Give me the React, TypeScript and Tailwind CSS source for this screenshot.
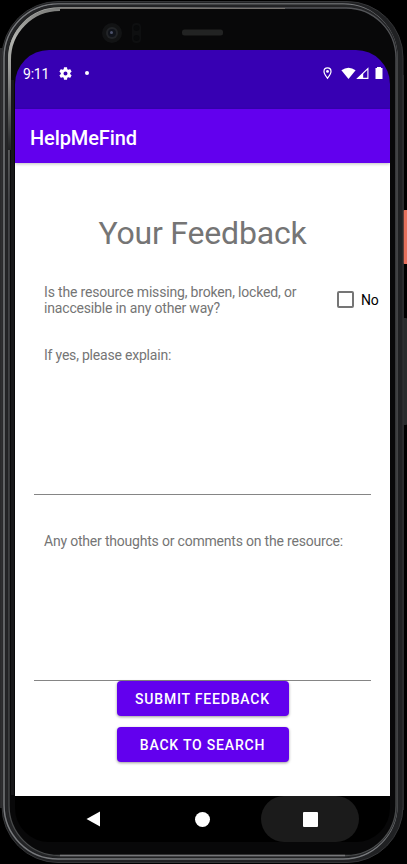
import React from "react";

function PhoneFrame() {
  return (
    <svg className="absolute inset-0" width="407" height="864" viewBox="0 0 407 864" fill="none" aria-hidden="true">
      <defs>
        <linearGradient id="metal" x1="0" y1="0" x2="407" y2="500" gradientUnits="userSpaceOnUse">
          <stop offset="0" stopColor="#a5a6a3" />
          <stop offset="0.12" stopColor="#a0a19d" />
          <stop offset="0.25" stopColor="#55565a" />
          <stop offset="1" stopColor="#484a4b" />
        </linearGradient>
        <linearGradient id="crescent" x1="10" y1="0" x2="10" y2="150" gradientUnits="userSpaceOnUse">
          <stop offset="0" stopColor="#6f706e" />
          <stop offset="0.25" stopColor="#b2b3af" />
          <stop offset="0.45" stopColor="#9b9c99" />
          <stop offset="1" stopColor="#222325" />
        </linearGradient>
      </defs>
      <rect x="0" y="48" width="3" height="760" fill="#29292b" />
      <rect x="401" y="75" width="3" height="735" fill="#222426" />
      <rect x="403.5" y="210" width="4" height="54" rx="1" fill="#e8705d" />
      <rect x="403" y="318" width="4" height="107" rx="1" fill="#292b2c" />
      <rect x="2" y="1.5" width="401" height="861" rx="56" fill="#202123" stroke="#343537" />
      <rect x="4" y="4" width="393" height="855" rx="54" stroke="#77797c" strokeWidth="1.5" />
      <rect x="6.5" y="5.5" width="390" height="851" rx="52" stroke="#242527" strokeWidth="2" />
      <rect x="9" y="8" width="387" height="847.5" rx="50" fill="#080809" stroke="url(#metal)" strokeWidth="1.3" />
      <path d="M9.5 150V60A50 50 0 0 1 60 9.5" stroke="url(#crescent)" strokeWidth="3" />
      <path d="M61 8.5H285" stroke="#77736f" />
      <path d="M60 855.5H345" stroke="#77777a" strokeWidth="1.5" />
      <path d="M12.5 80V795" stroke="#171719" strokeWidth="3" />
      <circle cx="112" cy="33" r="10" fill="#121314" />
      <circle cx="112" cy="33" r="6" fill="#222427" />
      <circle cx="112" cy="33" r="4" fill="#10131a" />
      <circle cx="111.5" cy="32.5" r="1.5" fill="#4d536c" />
      <rect x="132" y="23" width="9" height="20" rx="4" fill="#0e0f10" />
      <circle cx="136.5" cy="28" r="3" fill="#08090a" />
      <circle cx="136.5" cy="38" r="3" fill="#08090a" />
      <rect x="182" y="29.5" width="41" height="6" rx="2.5" fill="#222323" />
    </svg>
  );
}

function StatusBar() {
  return (
    <div className="flex h-[59px] shrink-0 items-start bg-[#3700b3] pt-[15px] pl-2 pr-[7px] text-white">
      <span className="w-[36px] text-[14px] leading-[18px] tracking-[-0.2px]">9:11</span>
      <svg className="mt-[1px] ml-[-1px]" width="15" height="15" viewBox="0 0 24 24" fill="currentColor">
        <path d="M19.43 12.98a7.8 7.8 0 0 0 0-1.96l2.11-1.65a.5.5 0 0 0 .12-.64l-2-3.46a.5.5 0 0 0-.61-.22l-2.49 1a7.3 7.3 0 0 0-1.69-.98l-.38-2.65A.49.49 0 0 0 14 2h-4a.49.49 0 0 0-.49.42l-.38 2.65c-.61.25-1.17.59-1.69.98l-2.49-1a.49.49 0 0 0-.61.22l-2 3.46a.49.49 0 0 0 .12.64l2.11 1.65a7.9 7.9 0 0 0 0 1.96l-2.11 1.65a.5.5 0 0 0-.12.64l2 3.46c.12.22.39.3.61.22l2.49-1c.52.4 1.08.73 1.69.98l.38 2.65c.03.24.24.42.49.42h4c.25 0 .46-.18.49-.42l.38-2.65a7.7 7.7 0 0 0 1.69-.98l2.49 1c.23.09.49 0 .61-.22l2-3.46a.5.5 0 0 0-.12-.64zM12 15.2a3.2 3.2 0 1 1 0-6.4 3.2 3.2 0 0 1 0 6.4z" />
      </svg>
      <span className="mt-[6px] ml-[12px] size-1 rounded-full bg-white" />
      <svg className="mt-[2px] ml-auto" width="9" height="13" viewBox="0 0 9 13" fill="none">
        <path d="M4.5 11.3C3.3 9.6 1 6.7 1 4.4a3.5 3.5 0 0 1 7 0c0 2.3-2.3 5.2-3.5 6.9Z" stroke="white" strokeWidth="1.2" />
        <circle cx="4.5" cy="4.4" r="1.4" fill="white" />
      </svg>
      <svg className="mt-[2px] ml-[9px]" width="15" height="13" viewBox="0 0 15 13" fill="white">
        <path d="M.4 3.3Q7.5-1.7 14.6 3.3L7.5 12Z" />
      </svg>
      <svg className="mt-[2px]" width="13" height="13" viewBox="0 0 13 13" fill="none">
        <path d="M1.6 11.4 11.9 1.5V11.4Z" stroke="white" strokeWidth="1.1" />
        <path d="M1 12 7.2 6V12Z" fill="white" />
      </svg>
      <svg className="mt-[2px] ml-[6px] mr-[0.5px]" width="8" height="13" viewBox="0 0 8 13" fill="white">
        <path d="M2 0h4v1h1.5v11H.5V1H2Z" />
      </svg>
    </div>
  );
}

function ActionButton({ children }: { children: React.ReactNode }) {
  return (
    <button className="h-[35px] w-[172px] rounded-[4px] bg-[#6200ee] pt-px text-[14px] font-medium tracking-[0.8px] text-white shadow-[0_1px_3px_rgba(0,0,0,0.4)]">
      {children}
    </button>
  );
}

function FeedbackForm() {
  return (
    <main className="flex flex-1 flex-col bg-white text-[14px] leading-4 tracking-[-0.2px] text-[#757575]">
      <h1 className="mt-[50px] text-center text-[32px] leading-10 tracking-[-0.18px]">Your Feedback</h1>
      <div className="mt-[31px] flex h-8 items-center pl-[29px]">
        <p className="w-[293px] whitespace-nowrap tracking-[-0.17px]">
          Is the resource missing, broken, locked, or
          <br />
          inaccesible in any other way?
        </p>
        <label className="flex items-center pb-px text-black">
          <span className="size-[17px] rounded-[2px] border-2 border-[#757575]" />
          <span className="ml-[7px] pt-px">No</span>
        </label>
      </div>
      <section className="mt-[31px] ml-[19px] flex h-[148px] w-[337px] flex-col border-b border-[#858585] pl-[10px]">
        <p>If yes, please explain:</p>
      </section>
      <section className="mt-[38px] ml-[19px] flex h-[148px] w-[337px] flex-col border-b border-[#858585] pl-[10px]">
        <p>Any other thoughts or comments on the resource:</p>
      </section>
      <div className="flex flex-col items-center gap-[11px]">
        <ActionButton>SUBMIT FEEDBACK</ActionButton>
        <ActionButton>BACK TO SEARCH</ActionButton>
      </div>
    </main>
  );
}

function NavigationBar() {
  return (
    <nav className="flex h-[46px] shrink-0 items-center bg-black text-white">
      <svg className="ml-[71px]" width="14" height="16" viewBox="0 0 14 16" fill="currentColor">
        <path d="M.5 8 14 .5v15Z" />
      </svg>
      <span className="ml-[95px] size-[15px] rounded-full bg-white" />
      <span className="ml-[51px] flex h-[46px] w-[98px] items-center justify-center rounded-full bg-[#1b1b1b]">
        <span className="size-[15px] rounded-[1px] bg-white" />
      </span>
    </nav>
  );
}

export default function App() {
  return (
    <div className="relative h-[864px] w-[407px] overflow-hidden bg-black pt-[50px] pl-[15px] font-['Roboto',sans-serif]">
      <PhoneFrame />
      <div className="relative flex h-[792px] w-[375px] flex-col overflow-hidden rounded-[34px]">
        <StatusBar />
        <header className="z-10 flex h-[54px] shrink-0 items-center bg-[#6200ee] pt-[3px] pl-[15px] text-[20px] font-medium tracking-[-0.1px] text-white shadow-[0_1px_3px_rgba(0,0,0,0.25)]">
          HelpMeFind
        </header>
        <FeedbackForm />
        <NavigationBar />
      </div>
    </div>
  );
}
